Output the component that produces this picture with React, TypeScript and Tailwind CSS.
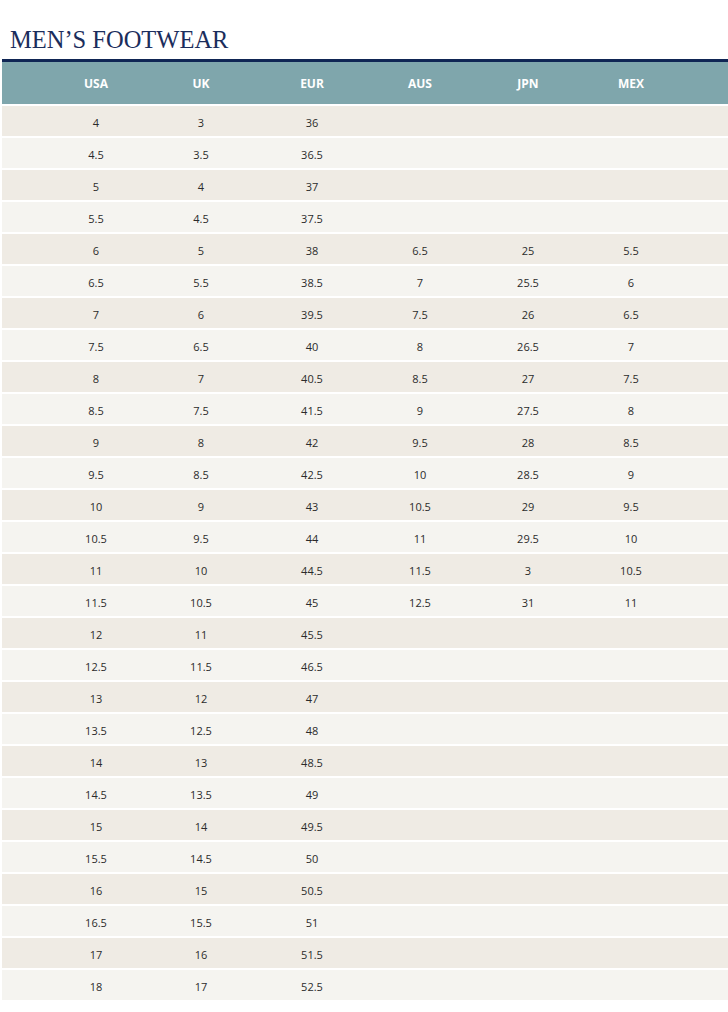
import React from "react"

const rows: string[][] = [
    ["4", "3", "36", "", "", ""],
    ["4.5", "3.5", "36.5", "", "", ""],
    ["5", "4", "37", "", "", ""],
    ["5.5", "4.5", "37.5", "", "", ""],
    ["6", "5", "38", "6.5", "25", "5.5"],
    ["6.5", "5.5", "38.5", "7", "25.5", "6"],
    ["7", "6", "39.5", "7.5", "26", "6.5"],
    ["7.5", "6.5", "40", "8", "26.5", "7"],
    ["8", "7", "40.5", "8.5", "27", "7.5"],
    ["8.5", "7.5", "41.5", "9", "27.5", "8"],
    ["9", "8", "42", "9.5", "28", "8.5"],
    ["9.5", "8.5", "42.5", "10", "28.5", "9"],
    ["10", "9", "43", "10.5", "29", "9.5"],
    ["10.5", "9.5", "44", "11", "29.5", "10"],
    ["11", "10", "44.5", "11.5", "3", "10.5"],
    ["11.5", "10.5", "45", "12.5", "31", "11"],
    ["12", "11", "45.5", "", "", ""],
    ["12.5", "11.5", "46.5", "", "", ""],
    ["13", "12", "47", "", "", ""],
    ["13.5", "12.5", "48", "", "", ""],
    ["14", "13", "48.5", "", "", ""],
    ["14.5", "13.5", "49", "", "", ""],
    ["15", "14", "49.5", "", "", ""],
    ["15.5", "14.5", "50", "", "", ""],
    ["16", "15", "50.5", "", "", ""],
    ["16.5", "15.5", "51", "", "", ""],
    ["17", "16", "51.5", "", "", ""],
    ["18", "17", "52.5", "", "", ""],
]

const headers = ["USA", "UK", "EUR", "AUS", "JPN", "MEX"]

const cols = "grid grid-cols-[42px_104px_106px_116px_100px_116px_90px_1fr]"

export default function App() {
    return (
        <div className="min-h-screen bg-white pl-[2px] pt-[24px] font-['Open_Sans',sans-serif]">
            {/* Title */}
            <h1 className="pl-[8px] font-['Liberation_Serif',serif] text-[24.5px] leading-[32px] text-[#1b2d5c]">
                MEN’S FOOTWEAR
            </h1>
            <div className="mt-[3px] h-[3px] bg-[#0f2554]" />

            {/* Header */}
            <div className={`${cols} h-[42px] items-center bg-[#7fa6ac] pt-[2px] text-[12px] font-bold text-white`}>
                <span />
                {headers.map((h) => (
                    <span key={h} className="text-center">{h}</span>
                ))}
                <span />
            </div>

            {/* Body */}
            <div className="mt-[2px] flex flex-col gap-[2px]">
                {rows.map((r, i) => (
                    <div
                        key={i}
                        className={`${cols} h-[30px] items-center pt-[5px] text-[11px] text-[#2b2b2b] ${
                            i % 2 === 0 ? "bg-[#efebe4]" : "bg-[#f5f4f0]"
                        }`}
                    >
                        <span />
                        {r.map((c, j) => (
                            <span key={j} className="text-center">{c}</span>
                        ))}
                        <span />
                    </div>
                ))}
            </div>
        </div>
    )
}
